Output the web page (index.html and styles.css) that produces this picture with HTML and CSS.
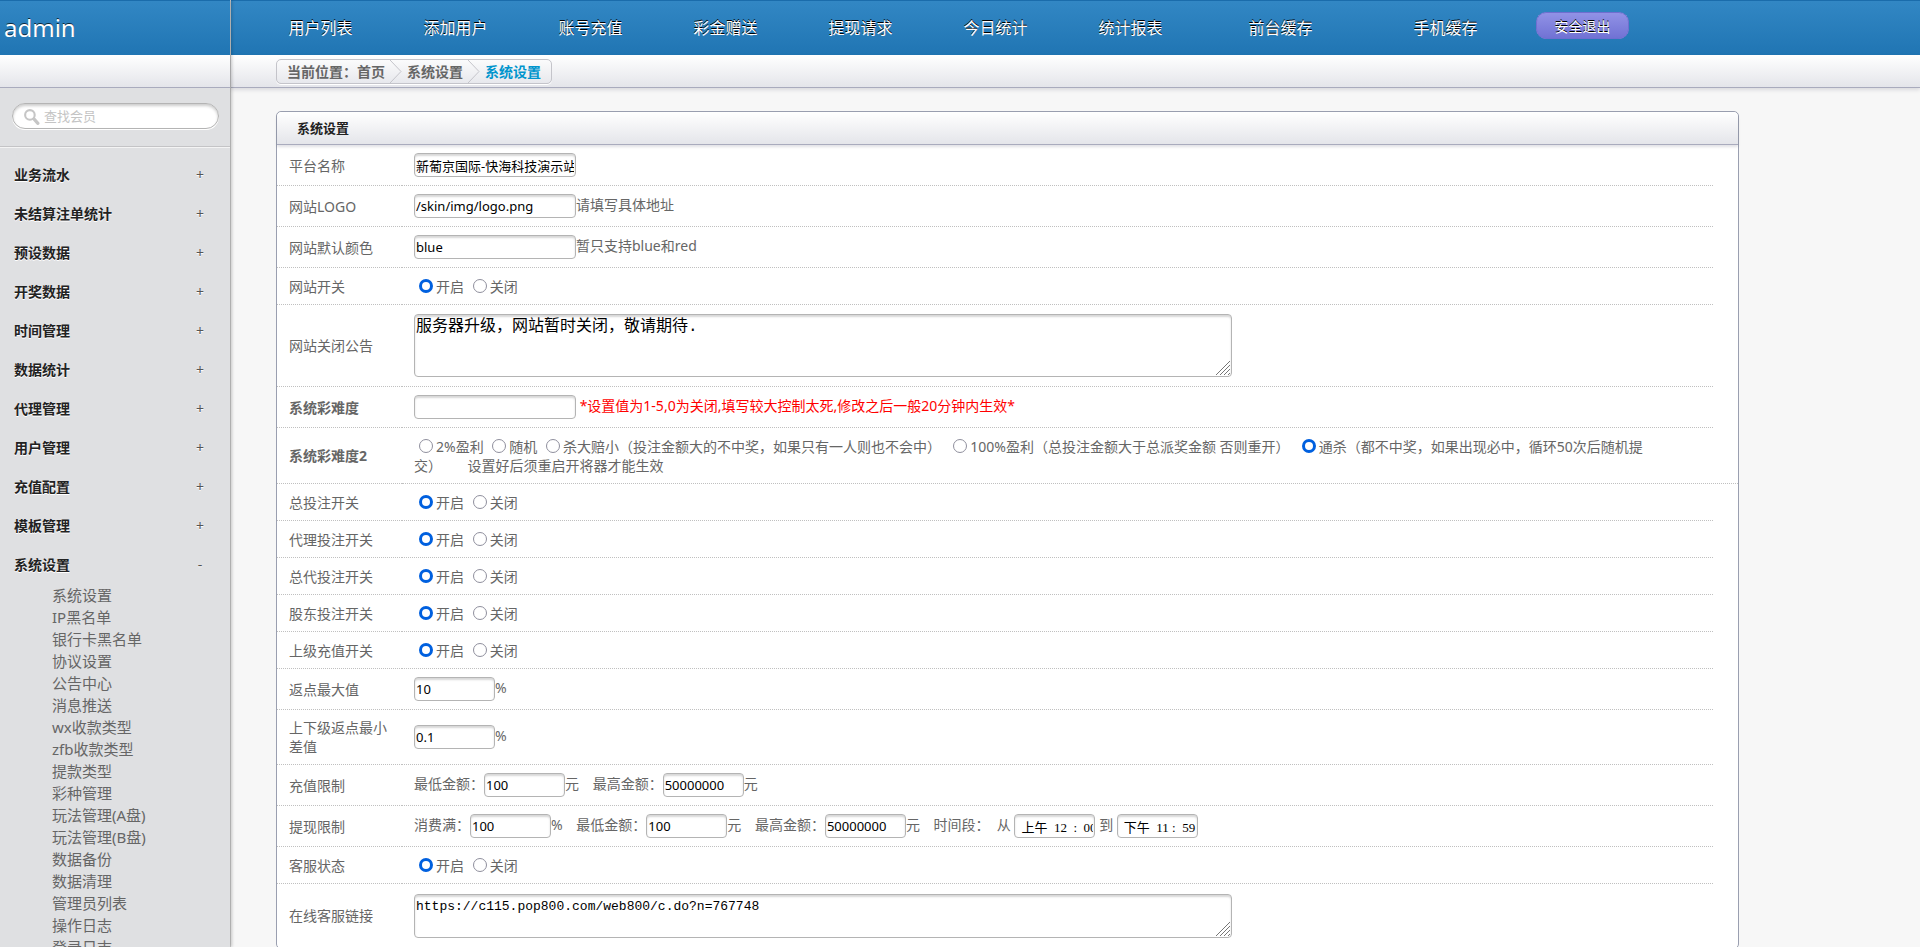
FILE: index.html
```html
<!DOCTYPE html>
<html lang="zh-CN">
<head>
    <meta charset="UTF-8">
    <meta name="viewport" content="width=device-width, initial-scale=1.0">
    <title>系统设置</title>
    <link rel="stylesheet" href="styles.css">
</head>
<body>
    <aside class="side">
        <div class="side-user">admin</div>
        <div class="side-strip"></div>
        <form class="side-search">
            <svg width="17" height="17" viewBox="0 0 16 16"><circle cx="6.5" cy="6.5" r="4.5" fill="none" stroke="#c6c6c6" stroke-width="2"/><path d="M10.5 10.5L14 14.5" stroke="#c6c6c6" stroke-width="3" stroke-linecap="round"/></svg>
            <input type="text" name="member" placeholder="查找会员" aria-label="查找会员">
        </form>
        <ul class="menu">
            <li><a href="#">业务流水<span>+</span></a></li>
            <li><a href="#">未结算注单统计<span>+</span></a></li>
            <li><a href="#">预设数据<span>+</span></a></li>
            <li><a href="#">开奖数据<span>+</span></a></li>
            <li><a href="#">时间管理<span>+</span></a></li>
            <li><a href="#">数据统计<span>+</span></a></li>
            <li><a href="#">代理管理<span>+</span></a></li>
            <li><a href="#">用户管理<span>+</span></a></li>
            <li><a href="#">充值配置<span>+</span></a></li>
            <li><a href="#">模板管理<span>+</span></a></li>
            <li><a href="#">系统设置<span>-</span></a></li>
        </ul>
        <ul class="submenu">
            <li><a href="#">系统设置</a></li>
            <li><a href="#">IP黑名单</a></li>
            <li><a href="#">银行卡黑名单</a></li>
            <li><a href="#">协议设置</a></li>
            <li><a href="#">公告中心</a></li>
            <li><a href="#">消息推送</a></li>
            <li><a href="#">wx收款类型</a></li>
            <li><a href="#">zfb收款类型</a></li>
            <li><a href="#">提款类型</a></li>
            <li><a href="#">彩种管理</a></li>
            <li><a href="#">玩法管理(A盘)</a></li>
            <li><a href="#">玩法管理(B盘)</a></li>
            <li><a href="#">数据备份</a></li>
            <li><a href="#">数据清理</a></li>
            <li><a href="#">管理员列表</a></li>
            <li><a href="#">操作日志</a></li>
            <li><a href="#">登录日志</a></li>
        </ul>
    </aside>

    <div class="page">
        <header class="top">
            <nav class="nav">
                <a href="#">用户列表</a>
                <a href="#">添加用户</a>
                <a href="#">账号充值</a>
                <a href="#">彩金赠送</a>
                <a href="#">提现请求</a>
                <a href="#">今日统计</a>
                <a href="#">统计报表</a>
                <a href="#" class="wide">前台缓存</a>
                <a href="#" class="wide">手机缓存</a>
            </nav>
            <button type="button" class="logout">安全退出</button>
        </header>

        <div class="bar">
            <div class="crumbs">
                <a href="#">当前位置：首页</a>
                <svg width="12" height="23" viewBox="0 0 12 23"><path d="M0 0L11 11.5L0 23" fill="none" stroke="#c4c4ca"/></svg>
                <a href="#">系统设置</a>
                <svg width="12" height="23" viewBox="0 0 12 23"><path d="M0 0L11 11.5L0 23" fill="none" stroke="#c4c4ca"/></svg>
                <a href="#" class="current">系统设置</a>
            </div>
        </div>

        <main class="content">
            <section class="panel">
                <h1>系统设置</h1>
                <form>
                <table class="settings">
                    <colgroup>
                        <col class="col-label">
                        <col>
                        <col class="col-end">
                    </colgroup>
                    <tr>
                        <th><label for="webName">平台名称</label></th>
                        <td><input type="text" class="text" id="webName" value="新葡京国际-快海科技演示站"></td>
                    </tr>
                    <tr>
                        <th><label for="webLogo">网站LOGO</label></th>
                        <td><input type="text" class="text" id="webLogo" value="/skin/img/logo.png">请填写具体地址</td>
                    </tr>
                    <tr>
                        <th><label for="webColor">网站默认颜色</label></th>
                        <td><input type="text" class="text" id="webColor" value="blue">暂只支持blue和red</td>
                    </tr>
                    <tr>
                        <th>网站开关</th>
                        <td>
                            <label><input type="radio" name="switchWeb" checked>开启</label>
                            <label><input type="radio" name="switchWeb">关闭</label>
                        </td>
                    </tr>
                    <tr class="row-notice">
                        <th><label for="notice">网站关闭公告</label></th>
                        <td><textarea id="notice" class="notice">服务器升级，网站暂时关闭，敬请期待.</textarea></td>
                    </tr>
                    <tr>
                        <th><label for="level"><b>系统彩难度</b></label></th>
                        <td><input type="text" class="text" id="level"> <span class="warn">*设置值为1-5,0为关闭,填写较大控制太死,修改之后一般20分钟内生效*</span></td>
                    </tr>
                    <tr>
                        <th><b>系统彩难度2</b></th>
                        <td colspan="2" class="modes">
                            <label><input type="radio" name="mode">2%盈利</label>
                            <label><input type="radio" name="mode">随机</label>
                            <label><input type="radio" name="mode">杀大赔小（投注金额大的不中奖，如果只有一人则也不会中）</label>&nbsp;
                            <label><input type="radio" name="mode">100%盈利（总投注金额大于总派奖金额 否则重开）</label>&nbsp;
                            <label><input type="radio" name="mode" checked>通杀（都不中奖，如果出现必中，循环50次后随机提交）</label>&nbsp;&nbsp;&nbsp;&nbsp;&nbsp;&nbsp; 设置好后须重启开将器才能生效
                        </td>
                    </tr>
                    <tr>
                        <th>总投注开关</th>
                        <td>
                            <label><input type="radio" name="switchBuy" checked>开启</label>
                            <label><input type="radio" name="switchBuy">关闭</label>
                        </td>
                    </tr>
                    <tr>
                        <th>代理投注开关</th>
                        <td>
                            <label><input type="radio" name="switchAgent" checked>开启</label>
                            <label><input type="radio" name="switchAgent">关闭</label>
                        </td>
                    </tr>
                    <tr>
                        <th>总代投注开关</th>
                        <td>
                            <label><input type="radio" name="switchTop" checked>开启</label>
                            <label><input type="radio" name="switchTop">关闭</label>
                        </td>
                    </tr>
                    <tr>
                        <th>股东投注开关</th>
                        <td>
                            <label><input type="radio" name="switchHolder" checked>开启</label>
                            <label><input type="radio" name="switchHolder">关闭</label>
                        </td>
                    </tr>
                    <tr>
                        <th>上级充值开关</th>
                        <td>
                            <label><input type="radio" name="switchUp" checked>开启</label>
                            <label><input type="radio" name="switchUp">关闭</label>
                        </td>
                    </tr>
                    <tr>
                        <th><label for="fanMax">返点最大值</label></th>
                        <td><input type="text" class="text short" id="fanMax" value="10">%</td>
                    </tr>
                    <tr>
                        <th><label for="fanDiff">上下级返点最小差值</label></th>
                        <td><input type="text" class="text short" id="fanDiff" value="0.1">%</td>
                    </tr>
                    <tr>
                        <th>充值限制</th>
                        <td>
                            <label class="part">最低金额：<input type="text" class="text short" value="100">元</label>
                            <label class="part">最高金额：<input type="text" class="text short" value="50000000">元</label>
                        </td>
                    </tr>
                    <tr>
                        <th>提现限制</th>
                        <td>
                            <label class="part">消费满：<input type="text" class="text short" value="100">%</label>
                            <label class="part">最低金额：<input type="text" class="text short" value="100">元</label>
                            <label class="part">最高金额：<input type="text" class="text short" value="50000000">元</label>
                            时间段：&nbsp;
                            <label>从 <input type="text" class="text short time" value="上午&nbsp;&nbsp;12&nbsp;&nbsp;:&nbsp;&nbsp;00"></label>
                            <label>到 <input type="text" class="text short time" value="下午&nbsp;&nbsp;11&nbsp;:&nbsp;&nbsp;59"></label>
                        </td>
                    </tr>
                    <tr>
                        <th>客服状态</th>
                        <td>
                            <label><input type="radio" name="kefu" checked>开启</label>
                            <label><input type="radio" name="kefu">关闭</label>
                        </td>
                    </tr>
                    <tr class="row-url">
                        <th><label for="kefuUrl">在线客服链接</label></th>
                        <td><textarea id="kefuUrl" class="url">https://c115.pop800.com/web800/c.do?n=767748</textarea></td>
                    </tr>
                </table>
                </form>
            </section>
        </main>
    </div>
</body>
</html>
```

FILE: styles.css
```css
* {
    box-sizing: border-box;
}

body {
    margin: 0;
    height: 100vh;
    overflow: hidden;
    display: flex;
    background-color: #f7f7f7;
    color: #666;
    font-family: "Noto Sans", "Noto Sans CJK SC", sans-serif;
    font-size: 14px;
    line-height: 19px;
}

a {
    color: inherit;
    text-decoration: none;
}

ul {
    list-style: none;
    margin: 0;
    padding: 0;
}

/* left column */
.side {
    flex: none;
    width: 231px;
    background-color: #dfe0e2;
    border-right: 1px solid rgba(0, 0, 0, 0.15);
    background-clip: padding-box;
    box-shadow: 1px 0 3px rgba(0, 0, 0, 0.2);
    z-index: 1;
}

.side-user {
    height: 55px;
    padding: 0 4px;
    line-height: 54px;
    font-size: 24px;
    color: #fff;
    text-shadow: 0 -1px 0 rgba(0, 0, 0, 0.7);
    border-top: 1px solid #1a6cab;
    background-image: linear-gradient(#3287c4, #2075b3);
}

.side-strip {
    height: 33px;
    border-bottom: 1px solid #a9abbd;
    background-image: linear-gradient(#fff, #e4e5ea);
}

.side-search {
    display: flex;
    align-items: center;
    height: 26px;
    margin: 15px 11px 17px 12px;
    padding: 0 10px;
    gap: 4px;
    border: 1px solid #b4b4b4;
    border-radius: 13px;
    background-color: #fff;
    box-shadow: inset 0 2px 3px rgba(0, 0, 0, 0.2), 0 1px 0 #fff;
}

.side-search input {
    width: 100%;
    border: none;
    outline: none;
    padding: 0;
    background: none;
    font-family: inherit;
    font-size: 13px;
}

.side-search svg {
    flex: none;
}

.side-search input::placeholder {
    color: #c4c4c4;
}

.menu {
    padding-top: 8px;
    border-top: 1px solid #c4c4c6;
    box-shadow: inset 0 1px 0 #f4f4f4;
}

.menu a {
    display: flex;
    justify-content: space-between;
    padding: 10px 26px 10px 14px;
    color: #222;
    font-weight: bold;
    text-shadow: 0 1px 0 #fff;
}

.menu span {
    width: 8px;
    text-align: center;
    color: #555;
    font-weight: normal;
}

.submenu {
    padding-left: 52px;
    font-size: 15px;
    line-height: 22px;
}

/* right column */
.page {
    flex: 1;
    min-width: 0;
}

.top {
    display: flex;
    align-items: flex-start;
    height: 55px;
    padding-left: 22px;
    border-top: 1px solid #1a6cab;
    background-image: linear-gradient(#3287c4, #2075b3);
}

.nav {
    display: flex;
}

.nav a {
    width: 135px;
    line-height: 54px;
    text-align: center;
    font-size: 16px;
    color: #fff;
    text-shadow: 0 -1px 0 #000;
}

.nav .wide {
    width: 165px;
}

.logout {
    width: 93px;
    height: 27px;
    margin: 11px 0 0 8px;
    padding: 0;
    border: 1px solid #6f6ed0;
    border-radius: 10px;
    background-image: linear-gradient(#9192e6, #7172d4);
    color: #fff;
    font-family: inherit;
    font-size: 14px;
    text-shadow: 0 -1px 0 #000;
    cursor: pointer;
}

.bar {
    height: 33px;
    padding: 4px 0 0 45px;
    border-bottom: 1px solid #a9abbd;
    background-image: linear-gradient(#fff, #e4e5ea);
    box-shadow: 0 2px 4px rgba(0, 0, 40, 0.12);
}

.crumbs {
    display: inline-flex;
    align-items: center;
    gap: 5px;
    height: 25px;
    padding: 0 10px;
    border: 1px solid #c4c4ca;
    border-radius: 5px;
    font-weight: bold;
    box-shadow: 0 1px 0 #fff;
}

.crumbs .current {
    color: #0095cd;
}

.content {
    padding: 23px 0 0 45px;
}

.panel {
    width: 89%;
    border: 1px solid #9a9fb0;
    border-radius: 5px;
    background-color: #fff;
}

.panel h1 {
    margin: 0;
    padding: 0 20px;
    font-size: 13px;
    line-height: 32px;
    color: #222;
    border-bottom: 1px solid #a9abbd;
    border-radius: 5px 5px 0 0;
    background-image: linear-gradient(#fff, #e4e5ea);
    box-shadow: 0 2px 3px rgba(0, 0, 40, 0.12);
}

/* settings table */
.settings {
    width: 100%;
    table-layout: fixed;
    border-spacing: 0;
}

.col-label {
    width: 125px;
}

.col-end {
    width: 25px;
}

.settings th,
.settings td {
    height: 37px;
    padding: 8px 12px;
    border-bottom: 1px dotted #c0c0c0;
    text-align: left;
    vertical-align: middle;
    font-weight: normal;
}

.settings .modes {
    height: 56px;
    padding-right: 88px;
}

.settings .row-notice td {
    height: 82px;
}

.settings .row-url td {
    height: 64px;
}

.text {
    width: 162px;
    height: 24px;
    padding: 0 1px;
    vertical-align: middle;
    font-family: inherit;
    font-size: 13px;
    color: #000;
}

.text,
textarea {
    margin: 0;
    border: 1px solid #b4b4b4;
    border-radius: 4px;
    background-color: #fff;
    box-shadow: inset 0 2px 2px rgba(0, 0, 0, 0.16);
}

.short {
    width: 81px;
}

.time {
    padding-left: 6px;
    font-family: "Liberation Serif", "Noto Sans CJK SC", serif;
}

.part {
    margin-right: 10px;
}

textarea {
    display: block;
    width: 818px;
    max-width: 100%;
    color: #000;
}

textarea::-webkit-resizer {
    background: url("data:image/svg+xml,%3Csvg xmlns='http://www.w3.org/2000/svg' width='15' height='15'%3E%3Cpath d='M0 14L14 0M4 14L14 4M8 14L14 8M12 14L14 12' stroke='%23777'/%3E%3C/svg%3E") no-repeat right bottom;
}

.notice {
    height: 63px;
    padding: 4px 1px;
    font-family: "Liberation Mono", "Noto Sans CJK SC", monospace;
    font-size: 16px;
    line-height: 16px;
}

.url {
    height: 44px;
    padding: 4px 1px;
    font-family: "Liberation Mono", monospace;
    font-size: 13px;
}

.settings input[type="radio"] {
    appearance: none;
    width: 14px;
    height: 14px;
    margin: 0 3px 0 5px;
    vertical-align: -1px;
    border: 1px solid #8f8f9d;
    border-radius: 50%;
    background-color: #fff;
}

.settings input[type="radio"]:checked {
    border: 3px solid #0060df;
}

.warn {
    color: #f00;
}
```
